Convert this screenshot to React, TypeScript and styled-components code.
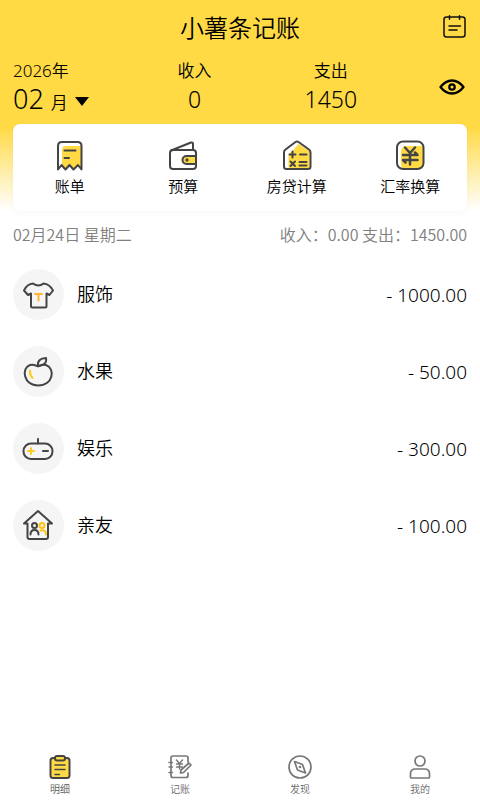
import React from "react";
import styled, { createGlobalStyle } from "styled-components";

const GlobalStyle = createGlobalStyle`
  *, *::before, *::after { box-sizing: border-box; }
  body {
    margin: 0;
    background: #fff;
    color: #000;
    font-family: "Noto Sans CJK SC", "Noto Sans", sans-serif;
    font-weight: 350;
  }
  button {
    font: inherit;
    color: inherit;
    background: none;
    border: 0;
    padding: 0;
    cursor: pointer;
  }
  svg { display: block; }
`;

const Page = styled.div`
  min-height: 100vh;
  display: flex;
  flex-direction: column;
`;

const Header = styled.header`
  padding: 0 13px;
  background: linear-gradient(#ffda44 0%, #ffda44 60%, #fff 100%);
`;

const TitleBar = styled.div`
  display: grid;
  grid-template-columns: 1fr auto 1fr;
  align-items: center;
  height: 54px;
`;

const Title = styled.h1`
  grid-column: 2;
  margin: 0;
  font-size: 24px;
  line-height: 32px;
  font-weight: 350;
`;

const IconButton = styled.button`
  justify-self: end;
`;

const Summary = styled.div`
  display: grid;
  grid-template-columns: 25% 30% 30% 15%;
  height: 70px;
  font-family: "Noto Sans", "Noto Sans CJK SC", sans-serif;
`;

const Stat = styled.div<{ $align?: "start" | "center" }>`
  display: flex;
  flex-direction: column;
  align-items: ${(p) => p.$align ?? "center"};
  padding-top: 5px;
`;

const StatLabel = styled.span`
  font-size: 17px;
  line-height: 24px;
`;

const StatValue = styled.span`
  font-size: 23px;
  line-height: 32px;
`;

const MonthButton = styled.button`
  display: flex;
  align-items: baseline;
  gap: 7px;
  line-height: 32px;
`;

const MonthNumber = styled.span`
  font-size: 27px;
`;

const MonthUnit = styled.span`
  font-size: 17px;
`;

const Caret = styled.svg`
  align-self: center;
`;

const EyeButton = styled.button`
  justify-self: end;
  align-self: center;
  padding: 0 2px 4px 0;
`;

const Shortcuts = styled.nav`
  display: grid;
  grid-template-columns: repeat(4, 1fr);
  height: 87px;
  border-radius: 7px;
  background: #fff;
  box-shadow: 0 2px 6px rgba(0, 0, 0, 0.03);
`;

const Shortcut = styled.button`
  display: flex;
  flex-direction: column;
  align-items: center;
  padding-top: 14px;
  font-size: 15px;
  line-height: 24px;
  gap: 2px;
`;

const Content = styled.main`
  flex: 1;
  padding: 0 13px;
`;

const DayHeader = styled.div`
  display: flex;
  justify-content: space-between;
  padding-top: 12px;
  font-size: 16px;
  line-height: 22px;
  color: #808080;
`;

const Records = styled.ul`
  margin: 11px 0 0;
  padding: 0;
  list-style: none;
`;

const Record = styled.li`
  display: flex;
  align-items: center;
  gap: 13px;
  height: 77px;
`;

const Badge = styled.span`
  display: grid;
  place-items: center;
  width: 51px;
  height: 51px;
  border-radius: 50%;
  background: #f5f5f5;
`;

const Category = styled.span`
  flex: 1;
  padding-bottom: 4px;
  font-size: 18px;
  line-height: 26px;
`;

const Amount = styled.span`
  font-family: "Noto Sans", "Noto Sans CJK SC", sans-serif;
  font-size: 19px;
  line-height: 28px;
`;

const TabBar = styled.nav`
  position: sticky;
  bottom: 0;
  display: grid;
  grid-template-columns: repeat(4, 1fr);
  height: 50px;
  background: #fff;
`;

const Tab = styled.button<{ $active?: boolean }>`
  display: flex;
  flex-direction: column;
  align-items: center;
  gap: 3px;
  padding-top: 5px;
  font-size: 10px;
  line-height: 14px;
  color: ${(p) => (p.$active ? "#555" : "#666")};
`;

const Y = "#ffda44";
const INK = "#444";

type IconProps = { size: number; width?: number; color?: string; children: React.ReactNode };

const Icon = ({ size, width = 2, color = INK, children }: IconProps) => (
  <svg
    width={size}
    height={size}
    viewBox={`0 0 ${size} ${size}`}
    fill="none"
    stroke={color}
    strokeWidth={width}
    strokeLinecap="round"
    strokeLinejoin="round"
    aria-hidden="true"
  >
    {children}
  </svg>
);

const shortcuts = [
  {
    label: "账单",
    icon: (
      <Icon size={34}>
        <path d="M9 12q0-4 4-4H28v22l-3.500-3-4.500 4-4-4-4 4-3-3z" fill={Y} stroke="none" />
        <path d="M5 31.500V8q0-4 4-4h15.500q4 0 4 4v23.500l-3.500-4.500-4.500 4.500-4-4.500-4 4.500-4-4.500z" />
        <path d="M11.500 12.500h11M11.500 20h4.500" />
      </Icon>
    ),
  },
  {
    label: "预算",
    icon: (
      <Icon size={34}>
        <path d="M5 12.500L25 4.500q2-.5 2 1.500v6" />
        <rect x="4" y="12" width="26" height="19" rx="3" />
        <path d="M30 18H20.500a4 4 0 0 0 0 8H30z" fill={Y} />
        <circle cx="21" cy="22" r=".7" />
      </Icon>
    ),
  },
  {
    label: "房贷计算",
    icon: (
      <Icon size={34}>
        <path d="M8.500 18q0-3 4-5l6-7 11 7v18h-18q-3 0-3-3z" fill={Y} stroke="none" />
        <path d="M15.500 4q1.500-1 3 0L29 11.500q1.500 1 1.500 3v14q0 2.500-2.500 2.500H6.500Q4 31 4 28.500v-14q0-2 1.500-3z" />
        <path d="M12.500 13.500v6M9.500 16.500h6M20 16.500h6.500M10.500 23.500l4.500 4.500M15 23.500l-4.500 4.500M19.500 24h7M19.500 27.500h7" />
      </Icon>
    ),
  },
  {
    label: "汇率换算",
    icon: (
      <Icon size={34}>
        <path d="M8 14q0-6 6-6h16v17q0 6-6 6H13q-5 0-5-5z" fill={Y} stroke="none" />
        <rect x="4" y="3.500" width="26.500" height="27.500" rx="6" />
        <path
          d="M12 9.500l5 5.500 5-5.500M17 15v11.500M10 17h14.500l-2.500-2.500M24.500 22H10l2.500 2.500"
          strokeWidth="2.500"
        />
      </Icon>
    ),
  },
];

const records = [
  {
    label: "服饰",
    amount: "- 1000.00",
    icon: (
      <Icon size={33}>
        <path d="M11 5.500q5.500 4 10.500 0 6 .5 9.500 7l-3.500 4.500-3-1.500V28q0 1.500-1.500 1.500H10.500Q9 29.500 9 28V15.500l-3 1.500-4-4.500q3-6.500 9-7z" />
        <path d="M13 16h7M16.500 16v6.500" stroke="#ffb52e" />
      </Icon>
    ),
  },
  {
    label: "水果",
    amount: "- 50.00",
    icon: (
      <Icon size={33}>
        <path d="M16 11.500q-4-2.500-8-1.500c-9 3-6.500 20.500 8 20.500 15.500 0 17.500-17 8-20.500q-4-1-8 1.500z" />
        <path d="M16 11q-1-7.500 8-8 1.500 7-8 8" />
        <path d="M8 15.500q-.5 4 2.500 7.500" stroke="#ffcb20" />
      </Icon>
    ),
  },
  {
    label: "娱乐",
    amount: "- 300.00",
    icon: (
      <Icon size={33}>
        <rect x="1.500" y="11.500" width="29" height="15.500" rx="7.500" />
        <path d="M16 7v4.500M21 19h5" />
        <path d="M9 16v6M6 19h6" stroke="#ffcb20" />
      </Icon>
    ),
  },
  {
    label: "亲友",
    amount: "- 100.00",
    icon: (
      <Icon size={33}>
        <path d="M5.500 14.500V28q0 2 2 2H24q2 0 2-2V14.500h4L16 2 2 14.500z" />
        <g stroke="#ffc312">
          <circle cx="20" cy="16.500" r="2.500" />
          <path d="M18.500 21.500q5.500-1.500 5.500 4" />
        </g>
        <circle cx="12.500" cy="16.500" r="2.500" />
        <path d="M8.500 25.500q0-4.500 4-4.500t4 4.500" />
      </Icon>
    ),
  },
];

const GREY = "#777";

const tabs = [
  {
    label: "明细",
    icon: (
      <Icon size={24}>
        <rect x="2.500" y="3" width="19" height="20" rx="2.500" fill={Y} />
        <rect x="7" y="1" width="10" height="4.500" rx="2" fill={Y} />
        <path d="M7 10h10M7 14.500h10M7 19.500h4.500" strokeWidth="1.500" />
      </Icon>
    ),
  },
  {
    label: "记账",
    icon: (
      <Icon size={24} width={1.7} color={GREY}>
        <path d="M20 7V3q0-2-2-2H5Q3 1 3 3v17.500q0 2 2 2h13q2 0 2-2V18" />
        <path
          d="M1 7.500h3.500M1 12h3.500M1 17.500h3.500M8.500 5l3 3.500 3-3.500M8.500 9h6M8.500 12h6M11.500 8.500v5.500"
          strokeWidth="1.400"
        />
        <path d="M21 8l2 2-7.500 7.500-3 .5.500-3z" fill="#fff" />
      </Icon>
    ),
  },
  {
    label: "发现",
    icon: (
      <Icon size={24} width={1.7} color={GREY}>
        <circle cx="12" cy="12" r="11" />
        <path d="M6.500 6.500l8 3 3 8.500-8-3z" />
        <circle cx="12" cy="12" r=".5" />
      </Icon>
    ),
  },
  {
    label: "我的",
    icon: (
      <Icon size={24} width={1.7} color={GREY}>
        <circle cx="12" cy="6" r="5" />
        <path d="M2.500 22v-3q0-5 5-5h9q5 0 5 5v3q0 1-1 1h-17q-1 0-1-1z" />
      </Icon>
    ),
  },
];

export default function App() {
  return (
    <Page>
      <GlobalStyle />
      <Header>
        <TitleBar>
          <Title>小薯条记账</Title>
          <IconButton aria-label="日历">
            <Icon size={24} width={1.5} color="#111">
              <rect x="1" y="2" width="21" height="20" rx="2.500" />
              <path d="M6.500 .8v3.500M16.500 .8v3.500M6 11h11.500M6 15h8" />
            </Icon>
          </IconButton>
        </TitleBar>
        <Summary>
          <Stat $align="start">
            <StatLabel>2026年</StatLabel>
            <MonthButton>
              <MonthNumber>02</MonthNumber>
              <MonthUnit>月</MonthUnit>
              <Caret width="14" height="9" viewBox="0 0 14 9" aria-hidden="true">
                <path d="M0 0h14L7 9z" />
              </Caret>
            </MonthButton>
          </Stat>
          <Stat>
            <StatLabel>收入</StatLabel>
            <StatValue>0</StatValue>
          </Stat>
          <Stat>
            <StatLabel>支出</StatLabel>
            <StatValue>1450</StatValue>
          </Stat>
          <EyeButton aria-label="显示金额">
            <Icon size={26} color="#000" width={2.3}>
              <path d="M1.500 13q5-6.500 11.500-6.500t11.500 6.500q-5 6.500-11.500 6.500T1.500 13z" />
              <circle cx="13" cy="13" r="2.700" />
            </Icon>
          </EyeButton>
        </Summary>
        <Shortcuts>
          {shortcuts.map((s) => (
            <Shortcut key={s.label}>
              {s.icon}
              {s.label}
            </Shortcut>
          ))}
        </Shortcuts>
      </Header>
      <Content>
        <DayHeader>
          <span>02月24日 星期二</span>
          <span>收入：0.00 支出：1450.00</span>
        </DayHeader>
        <Records>
          {records.map((r) => (
            <Record key={r.label}>
              <Badge>{r.icon}</Badge>
              <Category>{r.label}</Category>
              <Amount>{r.amount}</Amount>
            </Record>
          ))}
        </Records>
      </Content>
      <TabBar>
        {tabs.map((t, i) => (
          <Tab key={t.label} $active={i === 0} aria-current={i === 0 ? "page" : undefined}>
            {t.icon}
            {t.label}
          </Tab>
        ))}
      </TabBar>
    </Page>
  );
}
